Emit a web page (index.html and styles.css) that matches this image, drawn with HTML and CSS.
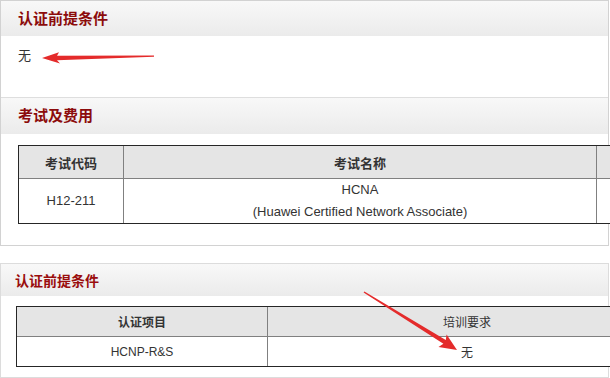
FILE: index.html
```html
<!DOCTYPE html>
<html lang="zh-CN">
<head>
<meta charset="utf-8">
<title>认证前提条件</title>
<link rel="stylesheet" href="styles.css">
</head>
<body>
<div class="box">
  <section class="panel">
    <h2 class="panel-title">认证前提条件</h2>
    <div class="panel-body prereq">无</div>
  </section>
  <section class="panel panel-sep">
    <h2 class="panel-title">考试及费用</h2>
    <div class="panel-body exam-body">
      <div class="table-wrap">
        <table class="grid exam-table">
          <colgroup><col class="w-code"><col class="w-name"><col class="w-fee"></colgroup>
          <thead>
            <tr><th class="bold">考试代码</th><th class="bold">考试名称</th><th></th></tr>
          </thead>
          <tbody>
            <tr><td>H12-211</td><td>HCNA<br>(Huawei Certified Network Associate)</td><td></td></tr>
          </tbody>
        </table>
      </div>
    </div>
  </section>
</div>

<div class="box box-second">
  <section class="panel">
    <h2 class="panel-title small">认证前提条件</h2>
    <div class="panel-body req-body">
      <div class="table-wrap">
        <table class="grid req-table">
          <colgroup><col class="w-item"><col class="w-train"></colgroup>
          <thead>
            <tr><th class="bold">认证项目</th><th>培训要求</th></tr>
          </thead>
          <tbody>
            <tr><td>HCNP-R&amp;S</td><td>无</td></tr>
          </tbody>
        </table>
      </div>
    </div>
  </section>
</div>

<!-- red callout arrows drawn over the content -->
<svg class="callout" width="610" height="378" viewBox="0 0 610 378" aria-hidden="true">
  <polygon fill="#e42b2b" points="42,58 59,52.3 57,55.8 154,55.4 154,56.8 57,60.2 60,63.6"/>
  <polygon fill="#e42b2b" points="457,350 438.5,347 443.4,343.8 363.6,292.6 364.4,291.4 445.8,340.1 446.6,334.4"/>
</svg>
</body>
</html>
```

FILE: styles.css
```css
html, body {
  margin: 0;
  padding: 0;
  background: #fff;
}

body {
  width: 610px;
  height: 378px;
  overflow: hidden;
  position: relative;
  font-family: "Liberation Sans", "Noto Sans CJK SC", sans-serif;
  color: #333;
}

.box {
  width: 609px;
  box-sizing: border-box;
  border: 1px solid #d2d2d2;
}

.box-second {
  margin-top: 17px;
  border-color: #dcdcdc;
}

.panel-sep {
  border-top: 1px solid #dedede;
}

.panel-title {
  margin: 0;
  height: 35px;
  line-height: 35px;
  padding-left: 17px;
  font-size: 15px;
  font-weight: bold;
  color: #8c0c0c;
  background: linear-gradient(#f8f8f8, #ebebeb);
}

.panel-sep .panel-title {
  height: 36px;
  line-height: 36px;
}

.panel-title.small {
  height: 32px;
  line-height: 35px;
  padding-left: 14px;
  font-size: 14px;
  color: #9a0d0d;
}

.prereq {
  padding: 10px 17px 31px;
  font-size: 13px;
  line-height: 20px;
  color: #333;
}

.exam-body {
  padding: 11px 0 21px 17px;
}

.req-body {
  padding: 10px 0 10px 15px;
}

/* wide tables are clipped at the page edge */
.table-wrap {
  overflow: hidden;
  margin-right: -2px;
}

/* data tables: dark outer frame, grey inner rules */
.grid {
  border-collapse: separate;
  border-spacing: 0;
  table-layout: fixed;
  border: 1px solid #262626;
  font-size: 12px;
  color: #333;
}

.grid th, .grid td {
  padding: 0;
  text-align: center;
  vertical-align: middle;
  font-weight: normal;
}

.grid th {
  background: #e5e5e5;
}

.grid th + th, .grid td + td {
  border-left: 1px solid #808080;
}

.grid td {
  border-top: 1px solid #808080;
  background: #fff;
}

.grid .bold {
  font-weight: bold;
}

.exam-table {
  width: 679px;
  font-size: 13px;
}

.exam-table th {
  height: 32px;
}

.exam-table td {
  height: 44px;
  line-height: 22px;
}

.w-code { width: 104px; }
.w-name { width: 473px; }
.w-fee { width: 100px; }

.req-table {
  width: 651px;
}

.req-table th,
.req-table td {
  height: 29px;
}

.w-item { width: 250px; }
.w-train { width: 399px; }

.callout {
  position: absolute;
  left: 0;
  top: 0;
  pointer-events: none;
}
```
